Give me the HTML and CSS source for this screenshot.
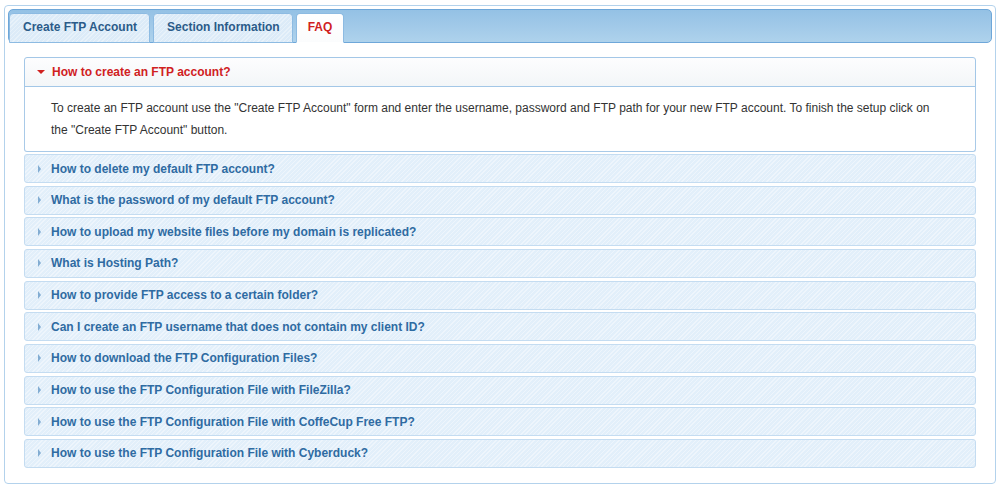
FILE: index.html
```html
<!DOCTYPE html>
<html lang="en">
<head>
<meta charset="utf-8">
<title>FTP Manager - FAQ</title>
<link rel="stylesheet" href="styles.css">
</head>
<body>
<div class="box">
  <div class="tabbar">
    <div class="tab">Create FTP Account</div>
    <div class="tab">Section Information</div>
    <div class="tab tab-active">FAQ</div>
  </div>
  <div class="panel">
    <div class="acc">
      <div class="acc-head acc-head-open"><span class="tri-down"></span>How to create an FTP account?</div>
      <div class="acc-body">To create an FTP account use the "Create FTP Account" form and enter the username, password and FTP path for your new FTP account. To finish the setup click on the "Create FTP Account" button.</div>
      <div class="acc-head"><span class="tri-right"></span>How to delete my default FTP account?</div>
      <div class="acc-head"><span class="tri-right"></span>What is the password of my default FTP account?</div>
      <div class="acc-head"><span class="tri-right"></span>How to upload my website files before my domain is replicated?</div>
      <div class="acc-head"><span class="tri-right"></span>What is Hosting Path?</div>
      <div class="acc-head"><span class="tri-right"></span>How to provide FTP access to a certain folder?</div>
      <div class="acc-head"><span class="tri-right"></span>Can I create an FTP username that does not contain my client ID?</div>
      <div class="acc-head"><span class="tri-right"></span>How to download the FTP Configuration Files?</div>
      <div class="acc-head"><span class="tri-right"></span>How to use the FTP Configuration File with FileZilla?</div>
      <div class="acc-head"><span class="tri-right"></span>How to use the FTP Configuration File with CoffeCup Free FTP?</div>
      <div class="acc-head"><span class="tri-right"></span>How to use the FTP Configuration File with Cyberduck?</div>
    </div>
  </div>
</div>
</body>
</html>
```
FILE: styles.css
```css
* { box-sizing: border-box; }
html, body { background: #ffffff; }
body {
  margin: 5px 4px 0 4px;
  font-family: "Liberation Sans", Arial, sans-serif;
  font-size: 12px;
  color: #333333;
}
.box {
  border: 1px solid #b3d2ec;
  border-radius: 4px;
  padding: 3px 3px 0 3px;
  background: #ffffff;
}
.tabbar {
  display: flex;
  align-items: flex-end;
  gap: 3px;
  height: 34px;
  padding: 3px 0 0 0;
  border: 1px solid #6ea7d9;
  border-radius: 5px;
  background: linear-gradient(#94c1e5, #aed2ec);
}
.tab {
  height: 30px;
  margin-bottom: -1px;
  padding: 0 12px 0 13px;
  border: 1px solid #8dbbe2;
  border-radius: 4px 4px 0 0;
  line-height: 27px;
  font-weight: bold;
  color: #2b5b89;
  background-color: #dcebf8;
  background-image: repeating-linear-gradient(-45deg, rgba(255,255,255,0.35) 0 1px, rgba(255,255,255,0) 1px 3px);
}
.tab-active {
  padding: 0 11px;
  color: #d0211f;
  border-color: #8dbbe2;
  border-bottom-color: #ffffff;
  background: linear-gradient(#ffffff, #fbfcfd);
}
.panel {
  padding: 14px 16px 15px 16px;
}
.acc {
  display: flex;
  flex-direction: column;
}
.acc-head {
  display: flex;
  align-items: center;
  height: 29px;
  margin-top: 2.67px;
  padding-left: 12px;
  border: 1px solid #c4dcf1;
  border-radius: 3px;
  font-weight: bold;
  color: #2f6ba2;
  background-color: #e2effa;
  background-image: repeating-linear-gradient(-45deg, rgba(255,255,255,0.4) 0 1px, rgba(255,255,255,0) 1px 3px);
}
.acc-head-open {
  height: 30px;
  margin-top: 0;
  border-color: #a3c7e7;
  border-radius: 3px 3px 0 0;
  color: #d0211f;
  background: linear-gradient(#fdfdfe, #f3f6f8);
}
.acc-body {
  margin-top: -1px;
  padding: 10px 26px 10px 26px;
  border: 1px solid #a9cae8;
  border-top-color: #a3c7e7;
  border-radius: 0 0 3px 3px;
  line-height: 22px;
  color: #333333;
  background: #ffffff;
}
.acc-body + .acc-head { margin-top: 2px; }
.tri-down {
  width: 0;
  height: 0;
  margin-right: 7px;
  border-left: 4px solid transparent;
  border-right: 4px solid transparent;
  border-top: 4px solid #d0211f;
}
.tri-right {
  width: 0;
  height: 0;
  margin-left: 1px;
  margin-right: 10px;
  border-top: 4px solid transparent;
  border-bottom: 4px solid transparent;
  border-left: 3px solid #82acd2;
}
```
